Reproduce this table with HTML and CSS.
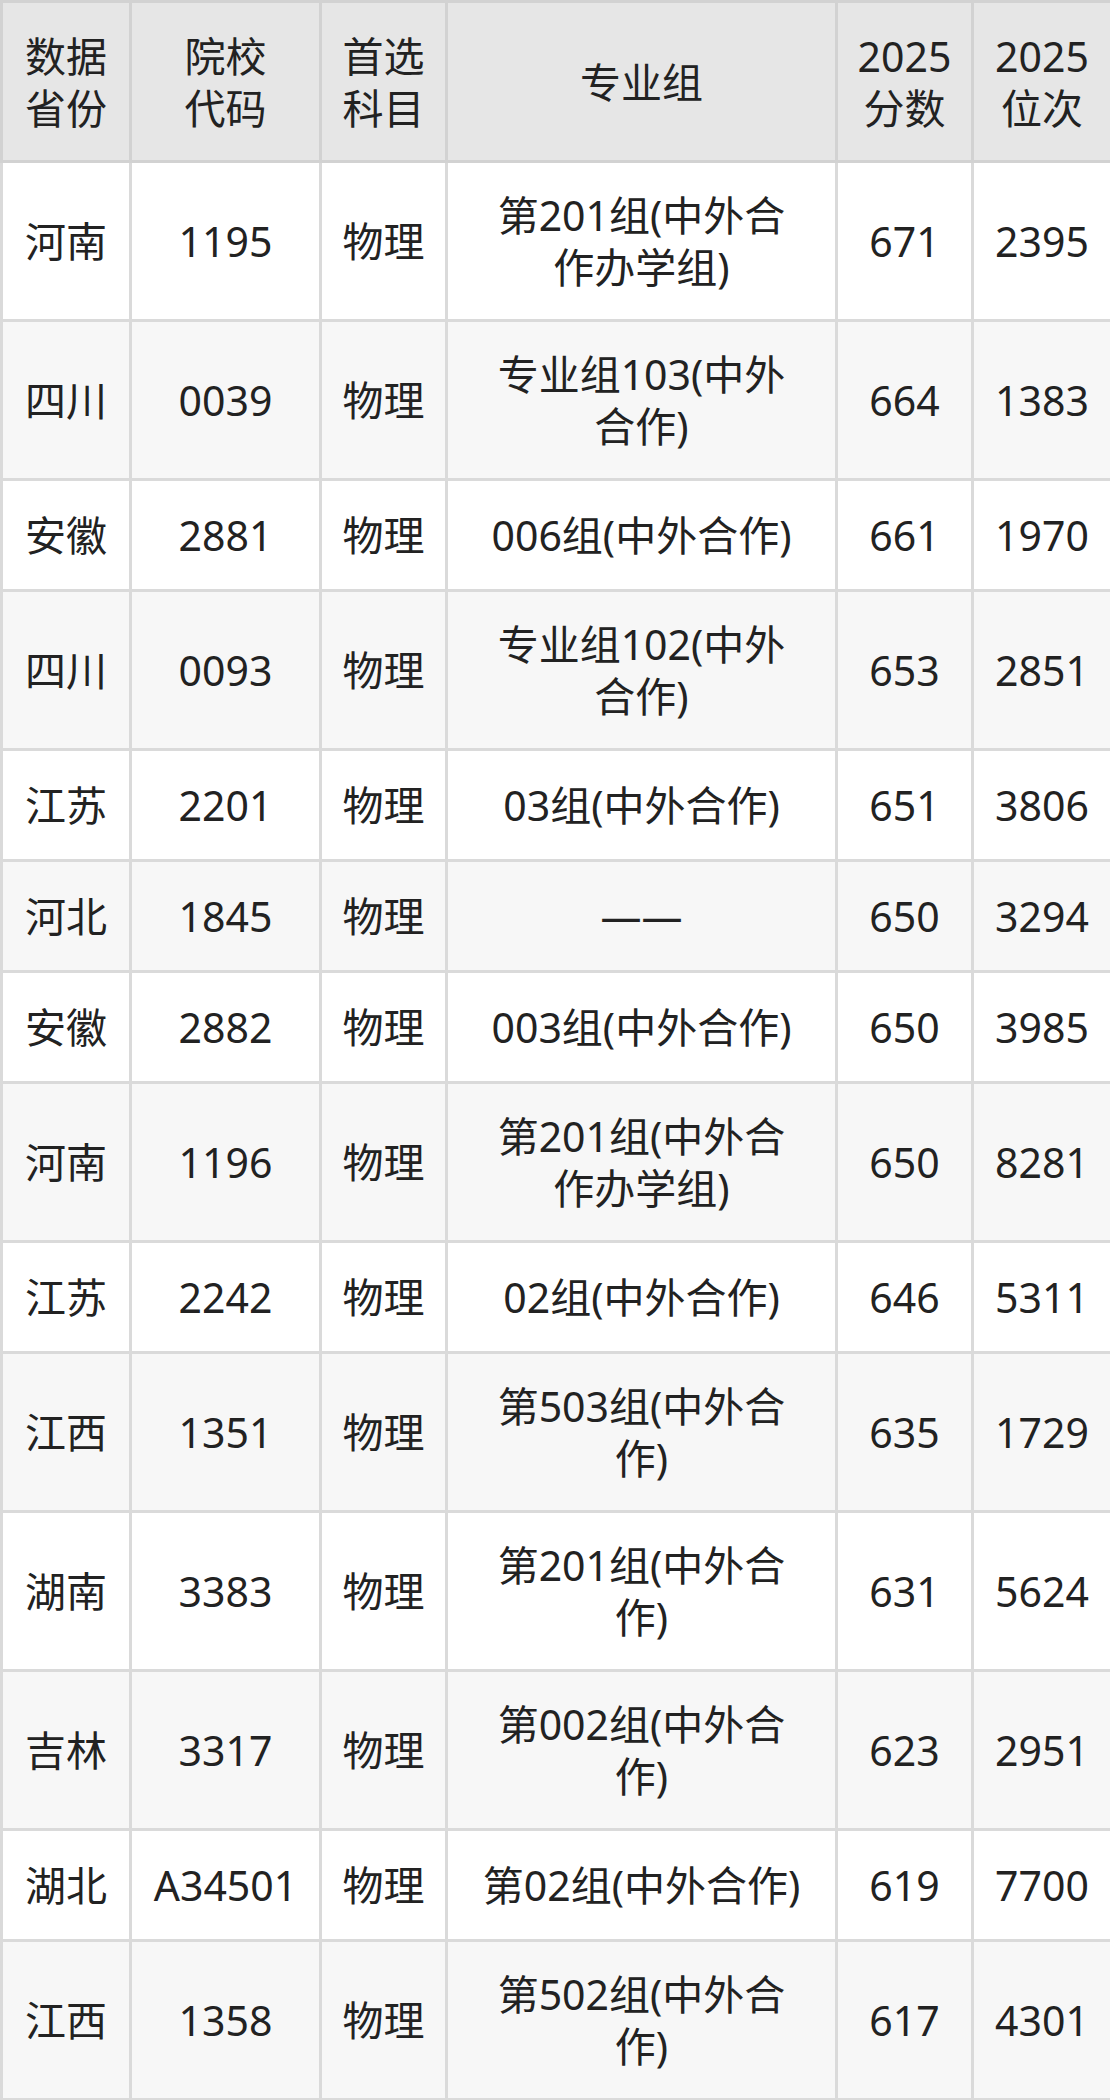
FILE: index.html
```html
<!DOCTYPE html>
<html lang="zh-CN">
<head>
<meta charset="utf-8">
<title>中外合作专业组分数</title>
<link rel="stylesheet" href="styles.css">
</head>
<body>
<table class="grid">
  <colgroup>
    <col class="c-prov">
    <col class="c-code">
    <col class="c-subj">
    <col class="c-group">
    <col class="c-score">
    <col class="c-rank">
  </colgroup>
  <thead>
    <tr class="head">
      <th>数据<br>省份</th>
      <th>院校<br>代码</th>
      <th>首选<br>科目</th>
      <th>专业组</th>
      <th>2025<br>分数</th>
      <th>2025<br>位次</th>
    </tr>
  </thead>
  <tbody>
    <tr class="two"><td>河南</td><td>1195</td><td>物理</td><td>第201组(中外合<br>作办学组)</td><td>671</td><td>2395</td></tr>
    <tr class="two"><td>四川</td><td>0039</td><td>物理</td><td>专业组103(中外<br>合作)</td><td>664</td><td>1383</td></tr>
    <tr class="one"><td>安徽</td><td>2881</td><td>物理</td><td>006组(中外合作)</td><td>661</td><td>1970</td></tr>
    <tr class="two"><td>四川</td><td>0093</td><td>物理</td><td>专业组102(中外<br>合作)</td><td>653</td><td>2851</td></tr>
    <tr class="one"><td>江苏</td><td>2201</td><td>物理</td><td>03组(中外合作)</td><td>651</td><td>3806</td></tr>
    <tr class="one"><td>河北</td><td>1845</td><td>物理</td><td>——</td><td>650</td><td>3294</td></tr>
    <tr class="one"><td>安徽</td><td>2882</td><td>物理</td><td>003组(中外合作)</td><td>650</td><td>3985</td></tr>
    <tr class="two"><td>河南</td><td>1196</td><td>物理</td><td>第201组(中外合<br>作办学组)</td><td>650</td><td>8281</td></tr>
    <tr class="one"><td>江苏</td><td>2242</td><td>物理</td><td>02组(中外合作)</td><td>646</td><td>5311</td></tr>
    <tr class="two"><td>江西</td><td>1351</td><td>物理</td><td>第503组(中外合<br>作)</td><td>635</td><td>1729</td></tr>
    <tr class="two"><td>湖南</td><td>3383</td><td>物理</td><td>第201组(中外合<br>作)</td><td>631</td><td>5624</td></tr>
    <tr class="two"><td>吉林</td><td>3317</td><td>物理</td><td>第002组(中外合<br>作)</td><td>623</td><td>2951</td></tr>
    <tr class="one"><td>湖北</td><td>A34501</td><td>物理</td><td>第02组(中外合作)</td><td>619</td><td>7700</td></tr>
    <tr class="two"><td>江西</td><td>1358</td><td>物理</td><td>第502组(中外合<br>作)</td><td>617</td><td>4301</td></tr>
  </tbody>
</table>
</body>
</html>
```

FILE: styles.css
```css
html, body {
  margin: 0;
  padding: 0;
  background: #ffffff;
}

.grid {
  width: 1110px;
  table-layout: fixed;
  border-collapse: collapse;
  font-family: "Noto Sans", "Noto Sans CJK SC", sans-serif;
  font-size: 41px;
  line-height: 52px;
  color: #222222;
}

.c-prov { width: 129px; }
.c-code { width: 190px; }
.c-subj { width: 126px; }
.c-group { width: 390px; }
.c-score { width: 136px; }
.c-rank { width: 139px; }

.grid th,
.grid td {
  border: 3px solid #dadada;
  padding: 0 2px;
  text-align: center;
  vertical-align: middle;
  font-weight: 400;
}

.head th {
  background: #e6e6e6;
  border-color: #d2d2d2;
  height: 157px;
}

.grid tbody tr:nth-child(even) td {
  background: #f7f7f7;
}

.one td {
  height: 108px;
}

.two td {
  height: 156px;
}
```
